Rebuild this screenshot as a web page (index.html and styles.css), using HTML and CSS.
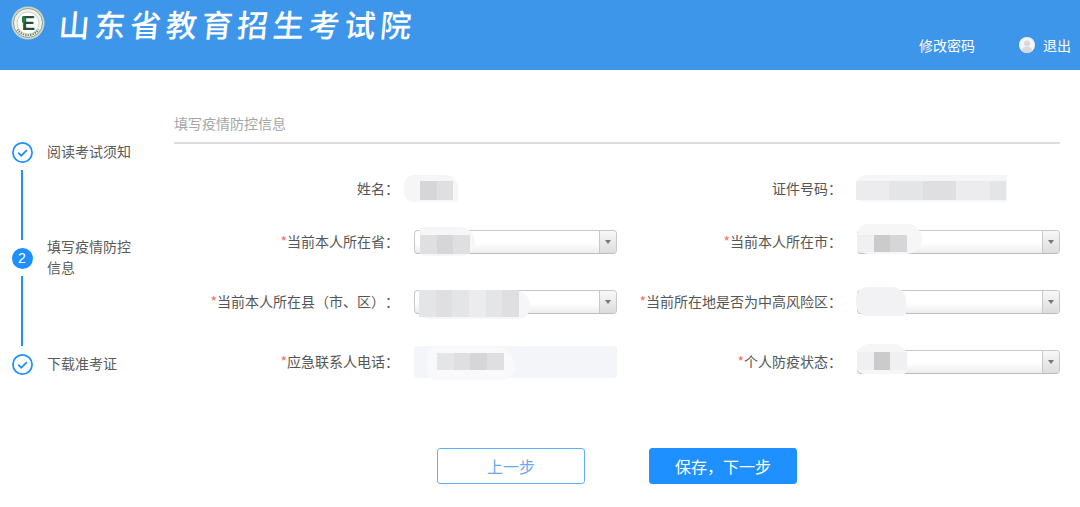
FILE: index.html
```html
<!DOCTYPE html>
<html lang="zh-CN">
<head>
<meta charset="utf-8">
<title>山东省教育招生考试院</title>
<link rel="stylesheet" href="styles.css">
</head>
<body>
<header class="header">
  <div class="brand">
    <svg class="logo" viewBox="0 0 34 34" width="34" height="34" aria-hidden="true">
      <circle cx="17" cy="17" r="16.5" fill="#ccd6c8"/>
      <circle cx="17" cy="17" r="14.500" fill="#f0f3ec" stroke="#8fa590" stroke-width="1"/>
      <path d="M6.500 23.500A12.600 12.600 0 0 0 27.500 23.500" fill="none" stroke="#5f7f64" stroke-width="2.200" stroke-dasharray="1.200 1.200"/>
      <circle cx="17" cy="17" r="11" fill="#fff" stroke="#b5c3b2" stroke-width=".8"/>
      <text x="17.500" y="24" text-anchor="middle" class="logo-e">E</text>
      <rect x="11" y="10.500" width="3.400" height="6" fill="#1f7a45"/>
    </svg>
    <h1 class="brand-name">山东省教育招生考试院</h1>
  </div>
  <nav class="header-nav">
    <a class="nav-link">修改密码</a>
    <a class="nav-link nav-exit">
      <svg class="avatar" viewBox="0 0 16 16" width="16" height="16" aria-hidden="true">
        <circle cx="8" cy="8" r="8" fill="#f4f5f6"/>
        <circle cx="8" cy="6.400" r="3" fill="#d8d8d8"/>
        <path d="M2.800 13.200c.8-2.600 2.800-3.600 5.200-3.600s4.400 1 5.200 3.600A8 8 0 0 1 8 16a8 8 0 0 1-5.200-2.800z" fill="#d8d8d8"/>
      </svg>
      退出
    </a>
  </nav>
</header>

<main class="page">
  <ol class="steps">
    <li class="step">
      <div class="rail">
        <svg class="step-icon" viewBox="0 0 20 20" width="21" height="21" aria-hidden="true">
          <circle cx="10" cy="10" r="9.100" fill="#fff" stroke="#1e90ff" stroke-width="1.700"/>
          <path d="M5.900 10.200l2.900 2.900 5.400-5.400" fill="none" stroke="#1e90ff" stroke-width="1.700"/>
        </svg>
        <span class="rail-line"></span>
      </div>
      <span class="step-text">阅读考试须知</span>
    </li>
    <li class="step">
      <div class="rail">
        <span class="step-num">2</span>
        <span class="rail-line"></span>
      </div>
      <span class="step-text step-text-wrap">填写疫情防控信息</span>
    </li>
    <li class="step">
      <div class="rail">
        <svg class="step-icon" viewBox="0 0 20 20" width="21" height="21" aria-hidden="true">
          <circle cx="10" cy="10" r="9.100" fill="#fff" stroke="#1e90ff" stroke-width="1.700"/>
          <path d="M5.900 10.200l2.900 2.900 5.400-5.400" fill="none" stroke="#1e90ff" stroke-width="1.700"/>
        </svg>
      </div>
      <span class="step-text">下载准考证</span>
    </li>
  </ol>

  <section class="content">
    <h2 class="section-title">填写疫情防控信息</h2>
    <form class="form-grid">
      <label class="label">姓名：</label>
      <div class="field">
        <div class="mask m-name"><i class="s4 w17"></i><i class="s3 w16"></i></div>
      </div>
      <label class="label">证件号码：</label>
      <div class="field">
        <div class="mask m-id"><i class="s1 w17"></i><i class="s1 w17"></i><i class="s2 w17"></i><i class="s2 w17"></i><i class="s3 w17"></i><i class="s3 w17"></i><i class="s1 w17"></i><i class="s1 w17"></i><i class="s2 w17"></i></div>
      </div>

      <label class="label"><span class="req">*</span>当前本人所在省：</label>
      <div class="field">
        <div class="select"><span class="select-btn"><span class="caret"></span></span></div>
        <div class="mask m-prov"><i class="s3 w17"></i><i class="s4 w17"></i><i class="s3 w16"></i></div>
      </div>
      <label class="label"><span class="req">*</span>当前本人所在市：</label>
      <div class="field">
        <div class="select"><span class="select-btn"><span class="caret"></span></span></div>
        <div class="mask m-city"><i class="s0 w16"></i><i class="s5 w17"></i><i class="s4 w17"></i></div>
      </div>

      <label class="label"><span class="req">*</span>当前本人所在县（市、区）：</label>
      <div class="field">
        <div class="select"><span class="select-btn"><span class="caret"></span></span></div>
        <div class="mask m-county"><i class="s2 w17"></i><i class="s3 w17"></i><i class="s2 w17"></i><i class="s1 w17"></i><i class="s2 w17"></i><i class="s3 w17"></i></div>
      </div>
      <label class="label"><span class="req">*</span>当前所在地是否为中高风险区：</label>
      <div class="field">
        <div class="select"><span class="select-btn"><span class="caret"></span></span></div>
        <div class="mask m-risk"></div>
      </div>

      <label class="label"><span class="req">*</span>应急联系人电话：</label>
      <div class="field">
        <div class="input-box"></div>
        <div class="mask m-phone"><i class="s2 w16"></i><i class="s3 w17"></i><i class="s4 w17"></i><i class="s3 w17"></i></div>
      </div>
      <label class="label"><span class="req">*</span>个人防疫状态：</label>
      <div class="field">
        <div class="select"><span class="select-btn"><span class="caret"></span></span></div>
        <div class="mask m-status"><i class="s0 w16"></i><i class="s5 w17"></i><i class="s0 w17"></i></div>
      </div>
    </form>
    <div class="actions">
      <button type="button" class="btn btn-ghost">上一步</button>
      <button type="button" class="btn btn-primary">保存，下一步</button>
    </div>
  </section>
</main>
</body>
</html>
```
FILE: styles.css
```css
* { box-sizing: border-box; }
html, body { margin: 0; padding: 0; }
body {
  width: 1080px;
  height: 507px;
  overflow: hidden;
  background: #fff;
  color: #555;
  font-family: "Noto Sans CJK SC", "Liberation Sans", sans-serif;
  font-size: 14px;
  text-spacing-trim: space-all;
}

/* header */
.header {
  height: 70px;
  background: #3e96ea;
  display: flex;
  justify-content: space-between;
  color: #fff;
}
.brand {
  display: flex;
  align-items: flex-start;
  padding: 6px 0 0 11px;
}
.logo { flex: none; }
.logo-e {
  font-family: "Liberation Sans", sans-serif;
  font-size: 20px;
  font-weight: 700;
  fill: #2d4a3a;
}
.brand-name {
  margin: -3px 0 0 14px;
  font-size: 31px;
  line-height: 42px;
  font-weight: 500;
  letter-spacing: 4.700px;
  white-space: nowrap;
  transform: skewX(-5deg);
}
.header-nav {
  display: flex;
  align-items: flex-start;
  gap: 44px;
  padding: 35px 9px 0 0;
  line-height: 20px;
}
.nav-link { display: flex; align-items: center; gap: 8px; }
.avatar { flex: none; }

/* page */
.page { display: flex; }
.steps {
  list-style: none;
  margin: 0;
  padding: 72px 0 0 12px;
  width: 174px;
  flex: none;
}
.step { display: flex; gap: 15px; }
.rail {
  width: 20px;
  flex: none;
  display: flex;
  flex-direction: column;
  align-items: center;
}
.step-icon { display: block; flex: none; margin: -0.500px; }
.step-num {
  width: 21px;
  height: 21px;
  margin: -0.500px;
  flex: none;
  border-radius: 50%;
  background: #1e90ff;
  color: #fff;
  font: 14px/21px "Liberation Sans", sans-serif;
  text-align: center;
}
.rail-line {
  width: 2px;
  height: 70px;
  margin: 8px 0;
  background: #1e90ff;
}
.step-text {
  width: 86px;
  line-height: 20px;
  margin-top: -1px;
  color: #5a5a5a;
}
.step-text-wrap {
  line-height: 21px;
  margin-top: -12px;
}

/* content */
.content {
  width: 886px;
  padding-top: 43px;
}
.section-title {
  margin: 0;
  height: 31px;
  line-height: 20px;
  border-bottom: 2px solid #ddd;
  font-size: 14px;
  font-weight: 400;
  color: #a5a5a5;
}
.form-grid {
  display: grid;
  grid-template-columns: 240px 203px 240px 203px;
  grid-template-rows: 48px 58px 62px 58px;
  align-items: center;
  margin-top: 21px;
}
.label {
  text-align: right;
  padding: 0 15px 2px 0;
  line-height: 20px;
  white-space: nowrap;
}
.req { color: #f56c6c; }
.field { position: relative; height: 24px; }
.select {
  height: 24px;
  border: 1px solid #c8c8c8;
  border-bottom-color: #bdbdbd;
  border-radius: 4px;
  background: linear-gradient(#fff 55%, #ececec);
  display: flex;
  justify-content: flex-end;
}
.select-btn {
  width: 17px;
  border-left: 1px solid #c8c8c8;
  border-radius: 0 3px 3px 0;
  background: linear-gradient(#f8f8f8, #dcdcdc);
  display: flex;
  align-items: center;
  justify-content: center;
}
.caret {
  width: 0;
  height: 0;
  border-left: 3px solid transparent;
  border-right: 3px solid transparent;
  border-top: 4px solid #777;
}
.input-box {
  position: relative;
  top: -4px;
  height: 32px;
  border-radius: 3px;
  background: #f4f5f9;
}

/* privacy mosaic over the field values */
.mask {
  position: absolute;
  display: flex;
  justify-content: flex-start;
  background: #f6f6f6;
}
.mask i { display: block; flex: none; }
.w16 { width: 16.500px; }
.w17 { width: 16.700px; }
.s0 { background: #f0f0f2; }
.s1 { background: #ececee; }
.s2 { background: #e4e5e7; }
.s3 { background: #dfdfe1; }
.s4 { background: #d6d6d8; }
.s5 { background: #cbcbcb; }

.m-name { left: -10px; top: -2px; width: 54px; height: 27px; padding: 6px 5px 2px 16px; border-radius: 10px 12px 3px 10px; }
.m-id { left: -1px; top: -2px; width: 151px; height: 27px; padding: 6px 0 2px 0; border-radius: 10px 0 0 10px; }
.m-prov { left: 6px; top: -3px; width: 55px; height: 29px; padding: 8px 5px 2px 0; border-radius: 4px 16px 14px 4px; }
.m-city { left: 0; top: -6px; width: 65px; height: 30px; padding: 11px 16px 2px 0; border-radius: 14px 20px 20px 14px; }
.m-county { left: 5px; top: 0; width: 111px; height: 29px; padding: 0 10px 2px 0; border-radius: 10px 16px 12px 10px; }
.m-risk { left: -1px; top: -3px; width: 50px; height: 29px; background: #f2f2f4; border-radius: 12px 14px 4px 12px; }
.m-phone { left: 13px; top: -3px; width: 88px; height: 33px; padding: 6px 0 10px 10px; background: #f9f9fb; border-radius: 14px 30px 20px 14px; }
.m-status { left: 0; top: -6px; width: 50px; height: 30px; padding: 8px 0 4px 0; background: #f6f6f6; border-radius: 12px 14px 4px 8px; }

/* actions */
.actions {
  display: flex;
  justify-content: center;
  gap: 64px;
  margin-top: 57px;
}
.btn {
  width: 148px;
  height: 36px;
  border-radius: 3px;
  font-family: inherit;
  font-size: 16px;
  padding: 0;
}
.btn-ghost {
  background: #fff;
  border: 1px solid #5fb0ff;
  color: #6aa9f0;
}
.btn-primary {
  background: #1e90ff;
  border: 1px solid #1e90ff;
  color: #fff;
}
```
